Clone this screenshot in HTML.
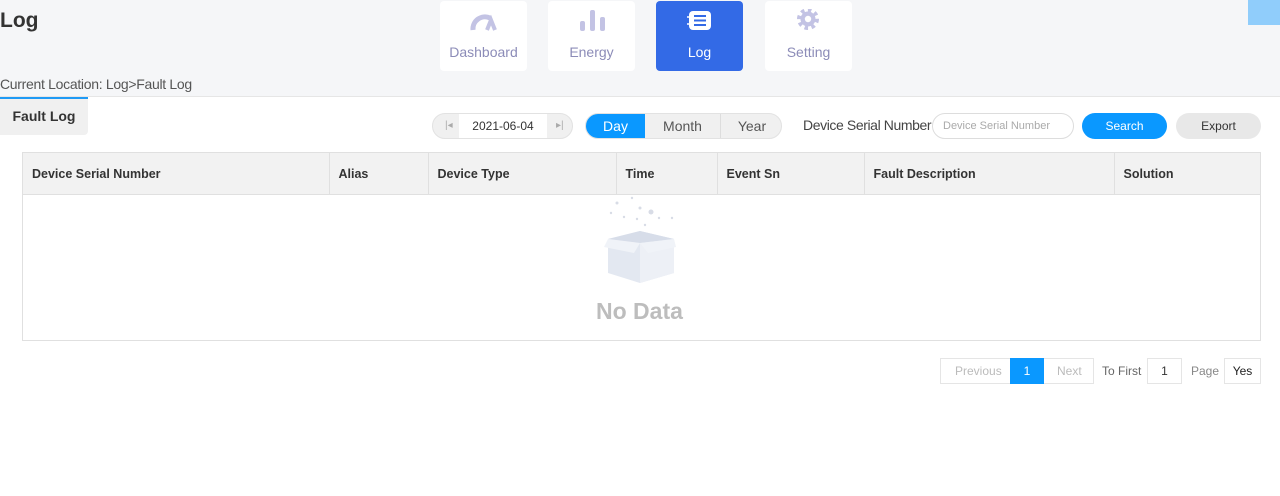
<!DOCTYPE html>
<html><head><meta charset="utf-8"><style>
*{box-sizing:border-box;margin:0;padding:0}
body{width:1280px;height:496px;background:#fff;font-family:"Liberation Sans",sans-serif;position:relative;overflow:hidden;color:#333}
.top{position:absolute;left:0;top:0;width:1280px;height:97px;background:#f5f6f8;border-bottom:1px solid #e6e6e6}
.abs{position:absolute}
.nav{position:absolute;top:1px;width:87px;height:70px;background:#fff;border-radius:4px;text-align:center;color:#8c8cb8;font-size:14px}
.nav span{position:absolute;left:0;right:0;top:43px}
.nav svg{position:absolute;left:28px;top:8px}
.btn{position:absolute;font-size:12px;text-align:center;border-radius:13px}
th{font-weight:bold;font-size:12.5px;text-align:left;padding-left:9px;border-right:1px solid #e0e0e0;height:41px;background:#f2f2f2;color:#333}
</style></head><body>
<div class="top"></div>
<div class="abs" style="left:1248px;top:0;width:32px;height:25px;background:#90cdfb"></div>
<div class="abs" style="left:0;top:9px;font-size:21px;font-weight:bold;color:#333">Log</div>
<div class="nav" style="left:440px"><svg width="32" height="24" viewBox="0 0 32 24"><path d="M5 21 A12 12 0 0 1 22 9" stroke="#c3c3e4" stroke-width="5" fill="none"/><path d="M19 21 L23 11 L27 21" stroke="#c3c3e4" stroke-width="4" fill="none"/></svg><span>Dashboard</span></div>
<div class="nav" style="left:548px"><svg width="32" height="24" viewBox="0 0 32 24"><rect x="4" y="12" width="5" height="10" rx="2" fill="#c3c3e4"/><rect x="14" y="1" width="5" height="21" rx="2" fill="#c3c3e4"/><rect x="24" y="8" width="5" height="14" rx="2" fill="#c3c3e4"/></svg><span>Energy</span></div>
<div class="nav" style="left:656px;background:#336ae6;color:#fff"><svg width="32" height="24" viewBox="0 0 32 24"><rect x="5" y="2" width="22" height="19" rx="4" fill="#fff"/><path d="M10 7h12M10 11.5h12M10 16h12" stroke="#336ae6" stroke-width="2"/><path d="M3 8h4M3 15h4" stroke="#fff" stroke-width="1.5"/></svg><span>Log</span></div>
<div class="nav" style="left:765px"><svg width="32" height="24" viewBox="0 0 32 24"><circle cx="15" cy="10" r="9" fill="none" stroke="#c3c3e4" stroke-width="4" stroke-dasharray="3.5 3.5"/><circle cx="15" cy="10" r="7.5" fill="#c3c3e4"/><circle cx="15" cy="10" r="3.2" fill="#fff"/></svg><span>Setting</span></div>
<div class="abs" style="left:0;top:76px;font-size:14px;color:#555;letter-spacing:-0.3px">Current Location: Log&gt;Fault Log</div>
<div class="abs" style="left:0;top:97px;width:88px;height:38px;background:#f0f0f0;border-top:2px solid #1f9af5;border-radius:0 0 4px 0;font-size:14px;font-weight:bold;text-align:center;line-height:34px">Fault Log</div>
<div class="abs" style="left:432px;top:113px;width:141px;height:26px;background:#f0f0f0;border:1px solid #e2e2e2;border-radius:13px"></div>
<div class="abs" style="left:459px;top:114px;width:88px;height:24px;background:#fff;font-size:12px;text-align:center;line-height:24px">2021-06-04</div>
<div class="abs" style="left:445px;top:120px;color:#aaa;font-size:10px">|◂</div>
<div class="abs" style="left:556px;top:120px;color:#aaa;font-size:10px">▸|</div>
<div class="abs" style="left:585px;top:113px;width:197px;height:26px;border:1px solid #e2e2e2;border-radius:13px;background:#f0f0f0;overflow:hidden;font-size:14px;color:#555">
<div class="abs" style="left:0;top:0;width:59px;height:24px;background:#0a98ff;color:#fff;text-align:center;line-height:24px">Day</div>
<div class="abs" style="left:59px;top:0;width:76px;height:24px;text-align:center;line-height:24px;border-right:1px solid #ddd">Month</div>
<div class="abs" style="left:135px;top:0;width:62px;height:24px;text-align:center;line-height:24px">Year</div></div>
<div class="abs" style="left:803px;top:117px;font-size:14px;color:#444;letter-spacing:-0.4px">Device Serial Number</div>
<div class="abs" style="left:932px;top:113px;width:142px;height:26px;border:1px solid #ddd;border-radius:13px;font-size:11px;color:#aaa;line-height:24px;padding-left:10px;background:#fff">Device Serial Number</div>
<div class="btn" style="left:1082px;top:113px;width:85px;height:26px;background:#0a98ff;color:#fff;line-height:26px">Search</div>
<div class="btn" style="left:1176px;top:113px;width:85px;height:26px;background:#e8e8e8;color:#333;line-height:26px">Export</div>
<div class="abs" style="left:22px;top:152px;width:1239px;height:189px;border:1px solid #e0e0e0">
<table style="border-collapse:collapse;width:1237px"><tr>
<th style="width:306px">Device Serial Number</th><th style="width:99px">Alias</th><th style="width:188px">Device Type</th><th style="width:101px">Time</th><th style="width:147px">Event Sn</th><th style="width:250px">Fault Description</th><th style="border:none">Solution</th></tr></table>
<div style="border-top:1px solid #e0e0e0"></div>
</div>
<svg class="abs" style="left:600px;top:195px" width="80" height="90" viewBox="0 0 80 90"><g fill="#d8dce6"><circle cx="17" cy="8" r="1.5"/><circle cx="32" cy="3" r="1.2"/><circle cx="40" cy="13" r="1.5"/><circle cx="51" cy="17" r="2.5"/><circle cx="11" cy="18" r="1.2"/><circle cx="24" cy="22" r="1.2"/><circle cx="37" cy="24" r="1.2"/><circle cx="59" cy="23" r="1.2"/><circle cx="45" cy="30" r="1.2"/><circle cx="72" cy="23" r="1.2"/></g>
<path d="M8 44 L40 36 L74 44 L74 78 L40 88 L8 78Z" fill="#e3e8f1"/><path d="M40 48 L74 44 L74 78 L40 88Z" fill="#edf0f6"/><path d="M8 44 L40 36 L74 44 L40 48Z" fill="#d7dde9"/><path d="M8 44 L40 48 L34 58 L4 52Z" fill="#f0f3f8"/><path d="M74 44 L40 48 L48 58 L76 52Z" fill="#f0f3f8"/></svg>
<div class="abs" style="left:596px;top:298px;font-size:23px;font-weight:bold;color:#bdbdbd">No Data</div>
<div class="abs" style="left:940px;top:358px;width:154px;height:26px;border:1px solid #e5e5e5;font-size:12px;color:#bbb">
<span class="abs" style="left:14px;top:5px">Previous</span><div class="abs" style="left:69px;top:-1px;width:34px;height:26px;background:#0a98ff;color:#fff;text-align:center;line-height:26px">1</div><span class="abs" style="left:116px;top:5px">Next</span></div>
<div class="abs" style="left:1102px;top:364px;font-size:12px;color:#666">To First</div>
<div class="abs" style="left:1147px;top:358px;width:35px;height:26px;border:1px solid #e5e5e5;font-size:12px;text-align:center;line-height:24px">1</div>
<div class="abs" style="left:1191px;top:364px;font-size:12px;color:#888">Page</div>
<div class="abs" style="left:1224px;top:358px;width:37px;height:26px;border:1px solid #e5e5e5;font-size:12px;text-align:center;line-height:24px;color:#222">Yes</div>
</body></html>
